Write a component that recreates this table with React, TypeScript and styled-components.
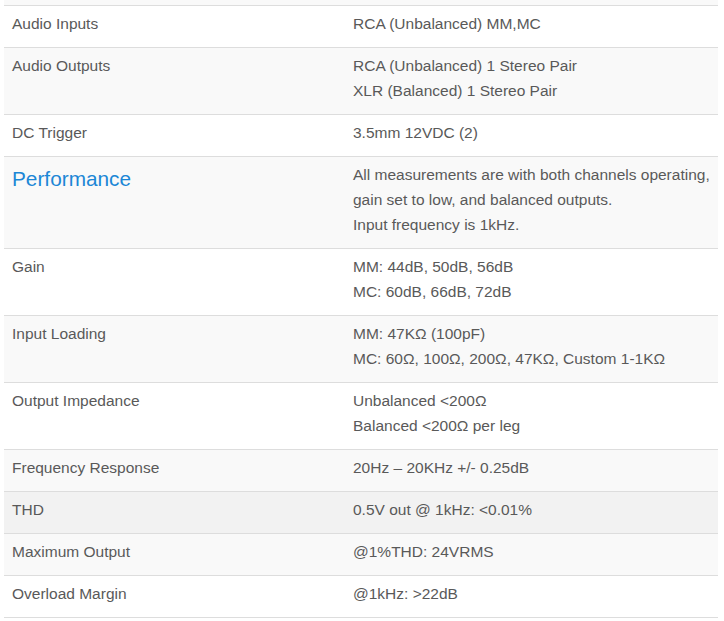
import React from "react";
import styled, { createGlobalStyle, css } from "styled-components";

const Global = createGlobalStyle`
  html, body { margin: 0; padding: 0; background: #fff; }
  body { font-family: "Liberation Sans", Arial, sans-serif; }
`;

const Table = styled.div`
  margin: 0 6px 0 4px;
  display: flex;
  flex-direction: column;
  border-bottom: 1px solid #dddddd;
`;

const Cap = styled.div`
  height: 5px;
  background: #f9f9f9;
`;

const Row = styled.div<{ $striped?: boolean; $hover?: boolean }>`
  display: grid;
  grid-template-columns: 341px 1fr;
  border-top: 1px solid #dddddd;
  background: #ffffff;
  ${(p) => p.$striped && css`background: #f9f9f9;`}
  ${(p) => p.$hover && css`background: #f2f2f2;`}
`;

const Cell = styled.div`
  padding: 5px 8px 11px 8px;
  font-size: 15.5px;
  line-height: 25px;
  color: #595959;
`;

const Line = styled.div`
  white-space: nowrap;
`;

const Heading = styled.div`
  font-size: 20.8px;
  line-height: 25px;
  padding-top: 4px;
  color: #1c87d6;
`;

type Spec = { label: string; values: string[]; heading?: boolean };

const specs: Spec[] = [
  { label: "Audio Inputs", values: ["RCA (Unbalanced) MM,MC"] },
  { label: "Audio Outputs", values: ["RCA (Unbalanced) 1 Stereo Pair", "XLR (Balanced) 1 Stereo Pair"] },
  { label: "DC Trigger", values: ["3.5mm 12VDC (2)"] },
  {
    label: "Performance",
    heading: true,
    values: [
      "All measurements are with both channels operating,",
      "gain set to low, and balanced outputs.",
      "Input frequency is 1kHz.",
    ],
  },
  { label: "Gain", values: ["MM: 44dB, 50dB, 56dB", "MC: 60dB, 66dB, 72dB"] },
  { label: "Input Loading", values: ["MM: 47KΩ (100pF)", "MC: 60Ω, 100Ω, 200Ω, 47KΩ, Custom 1-1KΩ"] },
  { label: "Output Impedance", values: ["Unbalanced <200Ω", "Balanced <200Ω per leg"] },
  { label: "Frequency Response", values: ["20Hz – 20KHz +/- 0.25dB"] },
  { label: "THD", values: ["0.5V out @ 1kHz: <0.01%"] },
  { label: "Maximum Output", values: ["@1%THD: 24VRMS"] },
  { label: "Overload Margin", values: ["@1kHz: >22dB"] },
];

export default function App() {
  return (
    <>
      <Global />
      <Table>
        <Cap />
        {specs.map((s, i) => (
          <Row key={s.label} $striped={i % 2 === 1} $hover={s.label === "THD"}>
            <Cell>{s.heading ? <Heading>{s.label}</Heading> : s.label}</Cell>
            <Cell>
              {s.values.map((v) => (
                <Line key={v}>{v}</Line>
              ))}
            </Cell>
          </Row>
        ))}
      </Table>
    </>
  );
}
